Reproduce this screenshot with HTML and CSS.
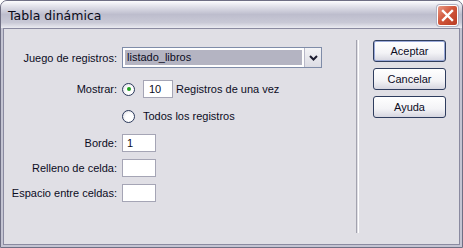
FILE: index.html
```html
<!DOCTYPE html>
<html lang="es">
<head>
  <meta charset="UTF-8" />
  <title>Tabla dinámica</title>
  <link rel="stylesheet" href="styles.css">
</head>
<body>

  <div class="window">

    <div class="titlebar">
      <span class="title">Tabla dinámica</span>
      <button class="close" aria-label="Cerrar">
        <svg width="13" height="13" viewBox="0 0 13 13">
          <path d="M2 2 L11 11 M11 2 L2 11" stroke="#fff" stroke-width="2.4" stroke-linecap="square" />
        </svg>
      </button>
    </div>

    <div class="content">

      <div class="form">
        <div class="row row-select">
          <label>Juego de registros:</label>
          <div class="select">
            <span class="select-value">listado_libros</span>
            <span class="select-arrow">
              <svg width="9" height="6" viewBox="0 0 9 6">
                <path d="M1 1 L4.5 4.5 L8 1" fill="none" stroke="#1c1c30" stroke-width="2" />
              </svg>
            </span>
          </div>
        </div>

        <div class="row row-show">
          <label>Mostrar:</label>
          <div class="inline">
            <span class="radio checked"></span>
            <span class="field field-num">10</span>
            <span>Registros de una vez</span>
          </div>
        </div>

        <div class="row row-all">
          <label></label>
          <div class="inline">
            <span class="radio"></span>
            <span class="radio-text">Todos los registros</span>
          </div>
        </div>

        <div class="row row-small">
          <label>Borde:</label>
          <span class="field">1</span>
        </div>

        <div class="row row-small">
          <label>Relleno de celda:</label>
          <span class="field"></span>
        </div>

        <div class="row row-small">
          <label>Espacio entre celdas:</label>
          <span class="field"></span>
        </div>
      </div>

      <div class="divider"></div>

      <div class="buttons">
        <button class="btn default">Aceptar</button>
        <button class="btn">Cancelar</button>
        <button class="btn">Ayuda</button>
      </div>

    </div>

  </div>

</body>
</html>
```

FILE: styles.css
```css
:root {
  --face: #e0dfe5;
  --ink: #0c0c1e;
}

body {
  margin: 0;
  font-family: 'Liberation Sans', Arial, sans-serif;
  font-size: 11px;
  color: var(--ink);
  background: #fff;
}

.window {
  width: 463px;
  height: 248px;
  box-sizing: border-box;
  border: 1px solid #6f6f84;
  border-radius: 7px 7px 0 0;
  background: #c4c4d2;
  display: flex;
  flex-direction: column;
  overflow: hidden;
}

.titlebar {
  height: 27px;
  flex-shrink: 0;
  display: flex;
  align-items: center;
  justify-content: space-between;
  padding: 0 4px 0 7px;
  background: linear-gradient(#fdfdfe 0%, #e4e4ec 18%, #bdbdcd 50%, #c9c9d6 80%, #ebebf1 100%);
}

.title {
  font-family: 'DejaVu Sans', sans-serif;
  font-size: 12.5px;
  color: #0a0a18;
  padding-top: 2px;
}

.close {
  width: 21px;
  height: 21px;
  padding: 0;
  border: 1px solid #fff;
  border-radius: 3px;
  background: linear-gradient(135deg, #e89a86 0%, #d2573c 45%, #b83a22 100%);
  box-shadow: 0 0 0 1px #b0b0c0;
  display: flex;
  align-items: center;
  justify-content: center;
  margin-top: 2px;
}

.content {
  flex: 1;
  margin: 0 2px 2px;
  border: 1px solid #8a8aa0;
  background: var(--face);
  display: flex;
  padding: 11px 13px 11px 0;
}

.form {
  width: 355px;
  padding-top: 7px;
}

.row {
  display: grid;
  grid-template-columns: 113px auto;
  column-gap: 5px;
  align-items: center;
}

.row label {
  text-align: right;
}

.row-select {
  height: 21px;
}

.row-show {
  height: 18px;
  margin-top: 12px;
}

.row-all {
  height: 18px;
  margin-top: 9px;
}

.row-small {
  height: 18px;
  margin-top: 7px;
}

.row-all + .row-small {
  margin-top: 9px;
}

.select {
  width: 200px;
  height: 21px;
  box-sizing: border-box;
  border: 1px solid #7f8ca8;
  background: #fff;
  display: flex;
}

.select-value {
  flex: 1;
  margin: 2px;
  padding-left: 2px;
  background: #b4b4c2;
  line-height: 15px;
}

.select-arrow {
  width: 16px;
  display: flex;
  align-items: center;
  justify-content: center;
  background: linear-gradient(#f3f3f6, #dcdce4);
  border-left: 1px solid #b8b8c8;
}

.inline {
  display: flex;
  align-items: center;
}

.radio {
  width: 11px;
  height: 11px;
  border: 1px solid #2c3a5c;
  border-radius: 50%;
  background: radial-gradient(circle at 60% 60%, #fff 40%, #d4d4dc 100%);
  display: flex;
  align-items: center;
  justify-content: center;
}

.radio.checked::after {
  content: '';
  width: 4px;
  height: 4px;
  border-radius: 50%;
  background: #21a121;
}

.radio-text {
  margin-left: 8px;
}

.field {
  width: 34px;
  height: 18px;
  box-sizing: border-box;
  border: 1px solid #a5a5b5;
  background: #fff;
  padding-left: 4px;
  line-height: 16px;
}

.field-num {
  width: 30px;
  margin: 0 3px 0 8px;
  padding-left: 5px;
}

.divider {
  width: 1px;
  border-left: 1px solid #a2a2ae;
  border-right: 1px solid #fff;
  margin: 0 14px 0 1px;
}

.buttons {
  display: flex;
  flex-direction: column;
  gap: 6px;
}

.btn {
  width: 73px;
  height: 22px;
  font-family: inherit;
  font-size: 11px;
  color: var(--ink);
  border: 1px solid #2f3d5e;
  border-radius: 3px;
  background: linear-gradient(#ffffff 0%, #f3f3f6 60%, #d6d6e0 100%);
  padding: 0;
}

.btn.default {
  box-shadow: inset 0 0 0 1px #9aa9d8;
}
```
